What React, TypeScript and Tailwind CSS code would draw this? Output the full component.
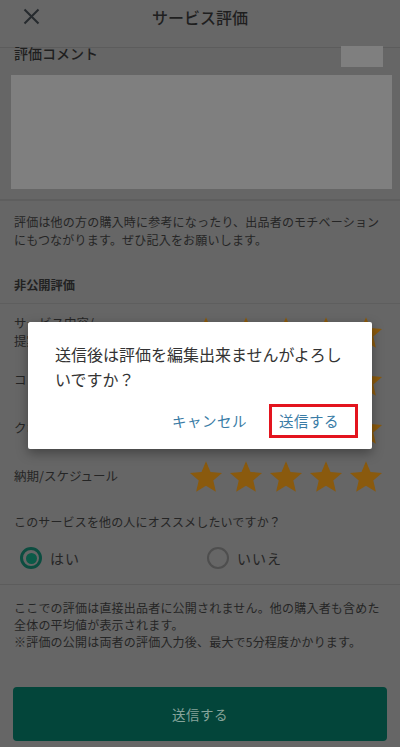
import React from "react";

const font = { fontFamily: '"Noto Sans CJK JP", "Noto Sans", sans-serif' };

function Star() {
  return (
    <svg width="32" height="31" viewBox="2 2 20 19" className="shrink-0">
      <path
        d="M12 17.27L18.18 21l-1.64-7.03L22 9.24l-7.19-.61L12 2 9.19 8.63 2 9.24l5.46 4.73L5.82 21z"
        fill="#8a5a0e"
      />
    </svg>
  );
}

function Stars() {
  return (
    <div className="flex gap-[8px]">
      <Star />
      <Star />
      <Star />
      <Star />
      <Star />
    </div>
  );
}

function Row({ label }: { label: React.ReactNode }) {
  return (
    <div className="flex h-[48px] items-center justify-between pl-[14px] pr-[18px]">
      <div className="text-[12.5px] leading-[18px] text-[#252525]">{label}</div>
      <Stars />
    </div>
  );
}

export default function App() {
  return (
    <div className="relative h-[747px] w-[400px] overflow-hidden bg-[#666666]" style={font}>
      {/* header */}
      <div className="h-[48px] border-b border-[#5c5c5c] bg-[#676767]">
        <div className="relative flex h-[33px] items-center justify-center">
          <svg className="absolute left-[23px] top-[8px]" width="17" height="17" viewBox="0 0 17 17">
            <path d="M1.5 1.5L15.5 15.5M15.5 1.5L1.5 15.5" stroke="#262a2e" strokeWidth="2" />
          </svg>
          <span className="text-[16px] font-medium text-[#1f1f1f]">サービス評価</span>
        </div>
      </div>

      {/* comment */}
      <div className="relative -mt-[2px] flex h-[21px] items-center justify-between pl-[14px] pr-[17px]">
        <span className="-mt-[6px] text-[14px] font-medium text-[#1f1f1f]">評価コメント</span>
        <div className="h-[21px] w-[42px] bg-[#7f7f7f]" />
      </div>
      <div className="ml-[11px] mr-[8px] mt-[8px] h-[114px] bg-[#7f7f7f]" />
      <div className="mt-[10px] border-b-2 border-[#5e5e5e]" />

      <div className="px-[14px] pt-[12px] text-[12px] leading-[18px] tracking-[0.2px] text-[#252525]">
        評価は他の方の購入時に参考になったり、出品者のモチベーションにもつながります。ぜひ記入をお願いします。
      </div>

      <div className="mt-[27px] px-[14px] text-[12.2px] font-bold leading-[18px] text-[#222]">非公開評価</div>
      <div className="mt-[9px] border-b border-[#5e5e5e]" />

      <div className="mt-[4px]">
        <Row
          label={
            <>
              サービス内容/
              <br />
              提案
            </>
          }
        />
        <Row label="コミュニケーション" />
        <Row label="クオリティ" />
        <Row label="納期/スケジュール" />
      </div>

      <div className="mt-[13px] px-[14px] text-[12px] leading-[18px] tracking-[0.15px] text-[#252525]">
        このサービスを他の人にオススメしたいですか？
      </div>

      <div className="mt-[13px] flex h-[28px] items-center">
        <div className="flex w-[207px] items-center pl-[20px]">
          <div className="flex h-[22px] w-[22px] items-center justify-center rounded-full border-[3px] border-[#0c4d40]">
            <div className="h-[11px] w-[11px] rounded-full bg-[#0b5a48]" />
          </div>
          <span className="ml-[8px] text-[14px] tracking-[1px] text-[#252525]">はい</span>
        </div>
        <div className="flex items-center">
          <div className="h-[22px] w-[22px] rounded-full border-2 border-[#4e4e4e]" />
          <span className="ml-[8px] text-[14px] tracking-[1px] text-[#252525]">いいえ</span>
        </div>
      </div>

      <div className="mt-[12px] border-b border-[#5c5c5c]" />

      <div className="px-[14px] pt-[14px] text-[12px] leading-[17px] tracking-[0.2px] text-[#252525]">
        <div>ここでの評価は直接出品者に公開されません。他の購入者も含めた全体の平均値が表示されます。</div>
        <div>※評価の公開は両者の評価入力後、最大で5分程度かかります。</div>
      </div>

      <div className="mx-[13px] mt-[37px] flex h-[54px] items-center justify-center rounded-[4px] bg-[#03453a]">
        <span className="text-[13.5px] tracking-[0.5px] text-[#86a49b]">送信する</span>
      </div>

      {/* dialog */}
      <div className="absolute left-[28px] top-[322px] w-[344px] rounded-[2px] bg-white shadow-[0_4px_12px_rgba(0,0,0,0.35)]">
        <div className="px-[27px] pt-[20px] text-[16px] leading-[25px] text-[#333]">
          送信後は評価を編集出来ませんがよろしいですか？
        </div>
        <div className="mt-[12px] flex items-center justify-end pb-[11px] pr-[14px]">
          <span className="mr-[22px] text-[14.5px] tracking-[0.5px] text-[#3a7ca6]">キャンセル</span>
          <div className="flex h-[34px] items-center border-[3px] border-[#e3141e] pl-[7px] pr-[16px]">
            <span className="text-[14.5px] tracking-[0.5px] text-[#3a7ca6]">送信する</span>
          </div>
        </div>
      </div>
    </div>
  );
}
